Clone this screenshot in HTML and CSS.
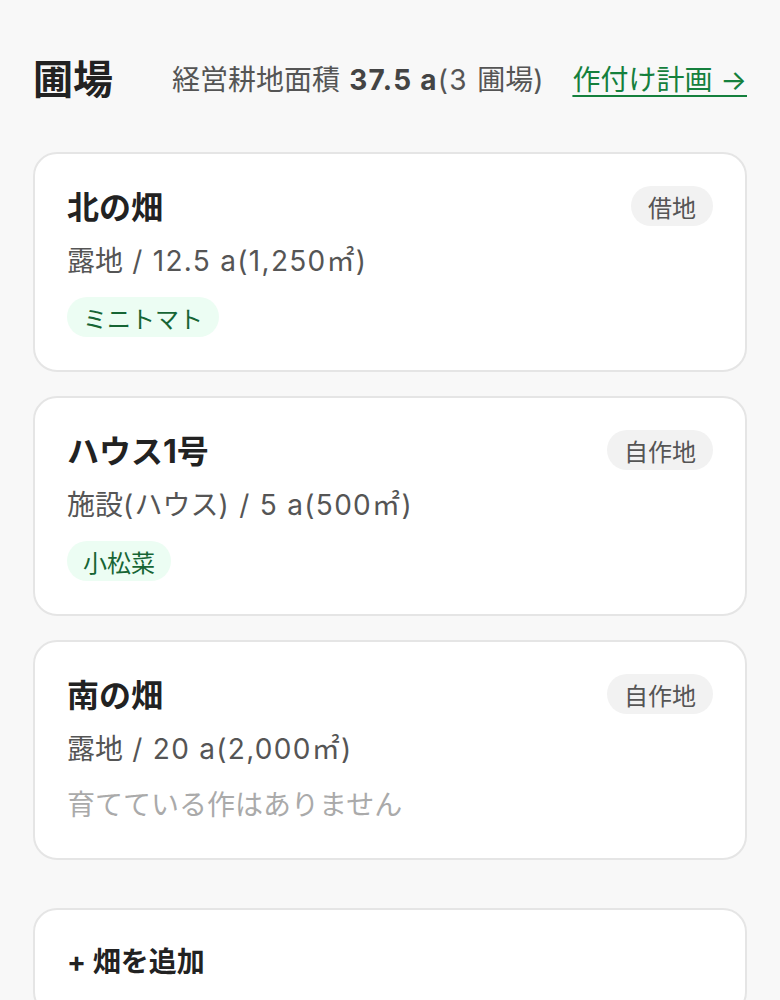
FILE: index.html
```html
<!DOCTYPE html>
<html lang="ja">
<head>
<meta charset="utf-8">
<title>圃場</title>
<link rel="stylesheet" href="styles.css">
</head>
<body>
<main class="page">
  <header class="head">
    <h1 class="head-title">圃場</h1>
    <p class="head-sub">経営耕地面積<span class="num"> <b>37.5 a</b>(3 </span>圃場<span class="num">)</span></p>
    <a class="head-link" href="#">作付け計画 →</a>
  </header>

  <section class="list">
    <article class="card">
      <div class="card-top">
        <h2 class="card-title">北の畑</h2>
        <span class="badge">借地</span>
      </div>
      <p class="card-meta">露地<span class="num"> / 12.5 a(1,250㎡)</span></p>
      <div class="chips"><span class="chip">ミニトマト</span></div>
    </article>

    <article class="card">
      <div class="card-top">
        <h2 class="card-title">ハウス1号</h2>
        <span class="badge">自作地</span>
      </div>
      <p class="card-meta">施設<span class="num">(</span>ハウス<span class="num">) / 5 a(500㎡)</span></p>
      <div class="chips"><span class="chip">小松菜</span></div>
    </article>

    <article class="card">
      <div class="card-top">
        <h2 class="card-title">南の畑</h2>
        <span class="badge">自作地</span>
      </div>
      <p class="card-meta">露地<span class="num"> / 20 a(2,000㎡)</span></p>
      <p class="card-empty">育てている作はありません</p>
    </article>
  </section>

  <button class="add-card" type="button">+ 畑を追加</button>
</main>
</body>
</html>
```

FILE: styles.css
```css
* { box-sizing: border-box; }

html, body {
  margin: 0;
  padding: 0;
  background: #f8f8f8;
}

body {
  font-family: Inter, "Noto Sans CJK JP", sans-serif;
  color: #222;
}

.page {
  padding: 52px 33px 40px;
}

.head {
  display: flex;
  align-items: center;
  height: 56px;
  margin-bottom: 44px;
}

.head-title {
  margin: 0;
  font-size: 40px;
  line-height: 56px;
  font-weight: 700;
  color: #222;
}

.head-sub {
  margin: 0 0 0 59px;
  font-size: 28px;
  line-height: 40px;
  color: #555;
}

.head-sub b {
  font-weight: 700;
  color: #444;
}

.num {
  letter-spacing: 1.3px;
}

.head-link {
  margin-left: auto;
  font-size: 28px;
  line-height: 40px;
  color: #15803d;
  text-decoration: underline;
  text-underline-offset: 5px;
  text-decoration-thickness: 2px;
}

.list {
  display: flex;
  flex-direction: column;
  gap: 24px;
}

.card {
  background: #fff;
  border: 2px solid #e5e5e5;
  border-radius: 24px;
  padding: 32px 32px 33px;
}

.card-top {
  display: flex;
  justify-content: space-between;
  align-items: flex-start;
}

.card-title {
  margin: 0;
  font-size: 32px;
  line-height: 44px;
  font-weight: 700;
  color: #222;
}

.badge {
  display: inline-flex;
  align-items: center;
  height: 40px;
  padding: 0 17px;
  border-radius: 20px;
  background: #f2f2f2;
  color: #555;
  font-size: 24px;
}

.card-meta {
  margin: 11px 0 0;
  font-size: 28px;
  line-height: 40px;
  color: #555;
}

.chips {
  display: flex;
  gap: 12px;
  margin-top: 16px;
}

.chip {
  display: inline-flex;
  align-items: center;
  height: 40px;
  padding: 0 16px;
  border-radius: 20px;
  background: #ecfdf3;
  color: #166534;
  font-size: 24px;
}

.card-empty {
  margin: 16px 0 0;
  font-size: 28px;
  line-height: 40px;
  color: #aaa;
}

.add-card {
  display: block;
  width: 100%;
  margin-top: 48px;
  padding: 32px 32px;
  background: #fff;
  border: 2px solid #e5e5e5;
  border-radius: 24px;
  text-align: left;
  font-family: Inter, "Noto Sans CJK JP", sans-serif;
  font-size: 28px;
  line-height: 40px;
  font-weight: 700;
  color: #222;
}
```
